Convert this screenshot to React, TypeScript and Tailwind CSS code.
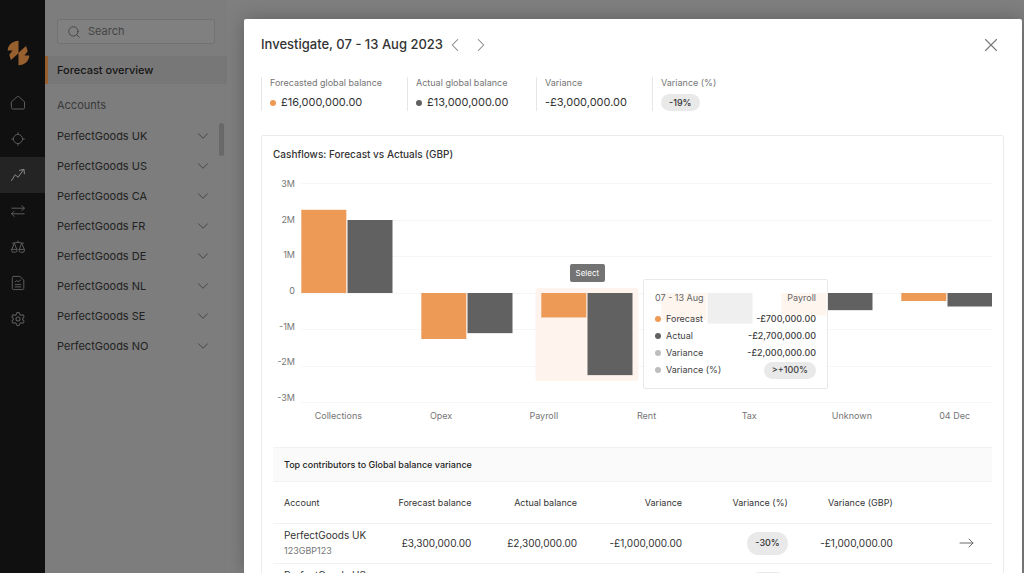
import React from "react";
import { ChevronDown, ChevronLeft, ChevronRight, Search, Settings, X } from "lucide-react";

const accounts = ["UK", "US", "CA", "FR", "DE", "NL", "SE", "NO"];

const stroke = {
  viewBox: "0 0 16 16",
  width: 16,
  height: 16,
  fill: "none",
  stroke: "currentColor",
  strokeWidth: 1,
  strokeLinecap: "round" as const,
  strokeLinejoin: "round" as const,
};

const navItems = [
  {
    label: "Home",
    icon: (
      <svg {...stroke}>
        <path d="M1.5 6.8 7.3 1.6a1 1 0 0 1 1.4 0l5.8 5.2v6a1.2 1.2 0 0 1-1.2 1.2H2.7a1.2 1.2 0 0 1-1.2-1.2Z" />
      </svg>
    ),
  },
  {
    label: "Positions",
    icon: (
      <svg {...stroke}>
        <circle cx="8" cy="8" r="4.6" />
        <path d="M8 1.6v1.8M8 12.6v1.8M1.6 8h1.8M12.6 8h1.8" />
      </svg>
    ),
  },
  {
    label: "Forecast",
    active: true,
    icon: (
      <svg {...stroke}>
        <path d="M1.5 13.5 5.2 7.8l2.9 2.4 5.4-7.4M9.4 3.4l4.6-1 .4 4.4" />
      </svg>
    ),
  },
  {
    label: "Transfers",
    icon: (
      <svg {...stroke}>
        <path d="M1.8 5.2h12.6M11.8 2.6l2.6 2.6-2.6 2.6M14.2 10.8H1.6M4.2 8.2l-2.6 2.6 2.6 2.6" />
      </svg>
    ),
  },
  {
    label: "Reconciliation",
    icon: (
      <svg {...stroke}>
        <path d="M8 2v1.6M2.6 4.2 8 3.4l5.4.8M4.3 4.4 1.7 10.4M4.3 4.4l2.5 6M11.7 4.4 9.2 10.4M11.7 4.4l2.6 6M1.6 10.4h5.3v1.4a1.4 1.4 0 0 1-1.4 1.4H3a1.4 1.4 0 0 1-1.4-1.4ZM9.1 10.4h5.3v1.4a1.4 1.4 0 0 1-1.4 1.4h-2.5a1.4 1.4 0 0 1-1.4-1.4Z" />
      </svg>
    ),
  },
  {
    label: "Reports",
    icon: (
      <svg {...stroke}>
        <path d="M3.6 1.4h6.2l4 3.6v8.3a1.3 1.3 0 0 1-1.3 1.3H3.6a1.3 1.3 0 0 1-1.3-1.3V2.7a1.3 1.3 0 0 1 1.3-1.3ZM5.2 9.6h5.6M5.2 11.9h5.6M5.2 6.8l1.6-1.3 1.4 1.3 2.4-1.8" />
      </svg>
    ),
  },
  { label: "Settings", icon: <Settings size={16} strokeWidth={1.6} /> },
];

const bars = [
  { forecast: 2.28, actual: 2.0 },
  { forecast: -1.26, actual: -1.1 },
  { forecast: -0.67, actual: -2.25 },
  { forecast: -0.74, actual: -0.84 },
  { forecast: -0.62, actual: -0.47 },
  { forecast: -0.22, actual: -0.37 },
];

const ticks = ["3M", "2M", "1M", "0", "-1M", "-2M", "-3M"];
const categories = ["Collections", "Opex", "Payroll", "Rent", "Tax", "Unknown", "04 Dec"];

const unit = 36.5;
const zero = 110;
const pct = (n: number) => `${(n / 691) * 100}%`;

function Bar({ x, value, fill }: { x: number; value: number; fill: string }) {
  const h = Math.abs(value) * unit;
  return <rect x={pct(x)} width={pct(45)} y={value > 0 ? zero - h : zero} height={h} fill={fill} />;
}

function Plot() {
  return (
    <svg className="block h-[220px] w-full" role="img" aria-label="Forecast and actual cashflows by category">
      {ticks.map((t, i) => (
        <rect key={t} x="0" width="100%" y={Math.round(i * unit)} height="1" fill="#f6f6f6" />
      ))}
      <rect x={pct(234.5)} y="105" width={pct(103)} height="93" rx="3" fill="#fef4ed" />
      {bars.map((b, i) => (
        <g key={i}>
          <Bar x={i * 120 + 0.3} value={b.forecast} fill="#ee9a57" />
          <Bar x={i * 120 + 46.5} value={b.actual} fill="#616161" />
        </g>
      ))}
    </svg>
  );
}

function Dot({ className }: { className: string }) {
  return <span className={`size-1.5 shrink-0 rounded-full ${className}`} />;
}

const detail = [
  { name: "Forecast", value: "-£700,000.00", dot: "bg-[#ee9a57]" },
  { name: "Actual", value: "-£2,700,000.00", dot: "bg-[#616161]" },
  { name: "Variance", value: "-£2,000,000.00", dot: "bg-[#bdbdbd]" },
];

function Tooltip() {
  return (
    <div className="absolute top-[96px] left-[49.5%] w-[185px] rounded-xs border border-[#e9e9e9] bg-white/90 px-[11px] py-[9px] text-[9px] text-[#3f3f3f]">
      <div className="flex h-[18px] items-center justify-between text-[#666]">
        <span>07 - 13 Aug</span>
        <span>Payroll</span>
      </div>
      <dl className="mt-[3px]">
        {detail.map((d) => (
          <div key={d.name} className="flex h-[17px] items-center justify-between">
            <dt className="flex items-center gap-[5px]">
              <Dot className={d.dot} />
              {d.name}
            </dt>
            <dd className="font-medium">{d.value}</dd>
          </div>
        ))}
        <div className="flex h-[18px] items-center justify-between">
          <dt className="flex items-center gap-[5px]">
            <Dot className="bg-[#bdbdbd]" />
            Variance (%)
          </dt>
          <dd className="flex h-[17px] items-center rounded-full bg-[#e9e9e9] px-2 font-medium">&gt;+100%</dd>
        </div>
      </dl>
    </div>
  );
}

const rows = [
  { name: "PerfectGoods UK", id: "123GBP123", forecast: "£3,300,000.00", actual: "£2,300,000.00", variance: "-£1,000,000.00", percent: "-30%" },
  { name: "PerfectGoods US", id: "123USD123", forecast: "£2,900,000.00", actual: "£2,100,000.00", variance: "-£800,000.00", percent: "-28%" },
];

function Contributors() {
  return (
    <section className="mt-[23px]">
      <h3 className="flex h-[35px] items-center border-y border-[#f2f2f2] bg-[#fafafa] px-[11px] text-[9px] font-medium text-[#222]">
        Top contributors to Global balance variance
      </h3>
      <table className="w-full table-fixed text-right text-[10px] text-[#333]">
        <colgroup>
          <col className="w-[27.6%]" />
          <col className="w-[14.7%]" />
          <col className="w-[14.6%]" />
          <col className="w-[14.7%]" />
          <col className="w-[14.6%]" />
          <col />
        </colgroup>
        <thead>
          <tr className="h-[41px] border-b border-[#f2f2f2] text-[9px] [&>th]:font-normal">
            <th scope="col" className="pl-[11px]">
              <span className="flex items-center justify-between">
                <span>Account</span>
                <span>Forecast balance</span>
              </span>
            </th>
            <th scope="col">Actual balance</th>
            <th scope="col">Variance</th>
            <th scope="col">Variance (%)</th>
            <th scope="col">Variance (GBP)</th>
            <th scope="col" aria-label="Open" />
          </tr>
        </thead>
        <tbody>
          {rows.map((r) => (
            <tr key={r.name} className="h-[40px] border-b border-[#f2f2f2]">
              <td className="pl-[11px]">
                <div className="flex items-center justify-between">
                  <div className="text-left">
                    <div className="leading-4">{r.name}</div>
                    <div className="text-[9px] leading-4 text-[#757575]">{r.id}</div>
                  </div>
                  <span>{r.forecast}</span>
                </div>
              </td>
              <td>{r.actual}</td>
              <td>{r.variance}</td>
              <td>
                <span className="inline-flex h-[23px] items-center rounded-full bg-[#e9e9e9] px-2 align-middle text-[9px] font-medium">
                  {r.percent}
                </span>
              </td>
              <td>{r.variance}</td>
              <td className="pr-[18px]">
                <button aria-label={`Open ${r.name}`} className="inline-flex align-middle text-[#6b6b6b]">
                  <svg {...stroke}>
                    <path d="M2 8h13M11 4l4 4-4 4" />
                  </svg>
                </button>
              </td>
            </tr>
          ))}
        </tbody>
      </table>
    </section>
  );
}

function Stat({ label, className, children }: { label: string; className: string; children: React.ReactNode }) {
  return (
    <div className={`flex h-[34px] flex-col justify-between border-l border-[#e6e6e6] pl-2 ${className}`}>
      <dt className="text-[9px] leading-3 text-[#757575]">{label}</dt>
      <dd className="flex h-[17px] items-center gap-[5px] text-[11px]">{children}</dd>
    </div>
  );
}

function InvestigateDialog() {
  return (
    <div
      role="dialog"
      aria-labelledby="dialog-title"
      className="flex-1 overflow-hidden rounded-t-xs bg-white pr-[18px] pl-[17px] text-[#333] shadow-[0_0_20px_rgba(0,0,0,0.25)]"
    >
      <header className="flex h-[52px] items-center">
        <h1 id="dialog-title" className="text-[13px] font-medium text-[#333]">
          Investigate, 07 - 13 Aug 2023
        </h1>
        <div className="ml-px flex gap-1 text-[#808080]">
          <button aria-label="Previous week">
            <ChevronLeft size={22} strokeWidth={1.1} />
          </button>
          <button aria-label="Next week">
            <ChevronRight size={22} strokeWidth={1.1} />
          </button>
        </div>
        <button aria-label="Close" className="mr-[2px] ml-auto text-[#777]">
          <X size={22} strokeWidth={1.2} />
        </button>
      </header>

      <dl className="mt-[6px] flex">
        <Stat label="Forecasted global balance" className="w-[146px]">
          <Dot className="bg-[#ee9a57]" />
          £16,000,000.00
        </Stat>
        <Stat label="Actual global balance" className="w-[129px]">
          <Dot className="bg-[#616161]" />
          £13,000,000.00
        </Stat>
        <Stat label="Variance" className="w-[116px]">
          -£3,000,000.00
        </Stat>
        <Stat label="Variance (%)" className="w-[116px]">
          <span className="flex h-[17px] items-center rounded-full bg-[#e9e9e9] px-2 text-[9px] font-medium">-19%</span>
        </Stat>
      </dl>

      <section className="mt-6 rounded-xs border border-[#ebebeb] px-[11px]">
        <h2 className="flex h-[36px] items-center text-[10px] font-medium text-[#333]">Cashflows: Forecast vs Actuals (GBP)</h2>
        <div className="mt-[11px] flex text-[9px] text-[#757575]">
          <div className="flex h-[226px] w-[28px] -translate-y-[5px] flex-col justify-between pr-[6px] text-right leading-3">
            {ticks.map((t) => (
              <span key={t}>{t}</span>
            ))}
          </div>
          <div className="relative min-w-0 flex-1">
            <Plot />
            <div className="-mx-[14px] mt-[5px] grid grid-cols-7 text-center leading-4">
              {categories.map((c) => (
                <span key={c}>{c}</span>
              ))}
            </div>
            <button className="absolute top-[81px] left-[38.9%] h-[18px] w-[35px] rounded-xs bg-[#737373] text-[8px] text-white">
              Select
            </button>
            <Tooltip />
          </div>
        </div>
        <Contributors />
      </section>
    </div>
  );
}

export default function App() {
  return (
    <div className="h-screen overflow-hidden bg-white pb-[3px] font-['Inter',sans-serif]">
      <div className="relative flex h-full overflow-hidden bg-[#7f7f7f]">
        <nav aria-label="Main" className="w-[45px] shrink-0 bg-[#101010] pt-10">
          <svg viewBox="20 121 70 79" className="ml-[7px] h-[26px] w-[23px]" fill="#99602f" aria-hidden="true">
            <path d="M55 123C36 124 23 136 22 153h15L27 166l5 16 23-21Z" />
            <path d="M55 198c19-1 32-13 33-30H73l10-13-5-16-23 21Z" />
          </svg>
          <ul className="mt-[19px]">
            {navItems.map((n) => (
              <li key={n.label}>
                <a
                  href="#"
                  aria-label={n.label}
                  className={`flex h-9 items-center pl-[10px] ${n.active ? "bg-[#242424] text-[#8a8a8a]" : "text-[#5c5c5c]"}`}
                >
                  {n.icon}
                </a>
              </li>
            ))}
          </ul>
        </nav>

        <aside className="flex w-[182px] shrink-0 flex-col bg-[#7d7d7d] pt-[19px] text-[11px] text-[#222]">
          <label className="mr-3 ml-3 flex h-[25px] shrink-0 items-center gap-[7px] rounded-xs border border-[#717171] bg-[#808080] pl-[9px] text-[#444]">
            <Search size={14} strokeWidth={1.6} />
            <input type="search" aria-label="Search" placeholder="Search" className="min-w-0 flex-1 bg-transparent outline-none placeholder:text-[#444]" />
          </label>
          <a href="#" className="mt-3 flex h-[28px] shrink-0 items-center border-l-3 border-[#99602f] bg-[#777] pl-[9px] font-medium text-[#151515]">
            Forecast overview
          </a>
          <h2 className="mt-[5px] flex h-8 items-center pl-3 text-[#3a3a3a]">Accounts</h2>
          <div className="flex pr-[3px]">
            <ul className="flex-1">
              {accounts.map((a) => (
                <li key={a}>
                  <button className="flex h-[30px] w-full items-center justify-between pr-[7px] pl-3">
                    PerfectGoods {a}
                    <ChevronDown size={18} strokeWidth={1.2} className="text-[#3f3f3f]" />
                  </button>
                </li>
              ))}
            </ul>
            <div className="mt-[2px] h-[33px] w-[5px] rounded-full bg-[#696969]" />
          </div>
        </aside>

        <div className="absolute inset-0 flex pt-[19px] pr-[2px] pl-[244px]">
          <InvestigateDialog />
        </div>
      </div>
    </div>
  );
}
